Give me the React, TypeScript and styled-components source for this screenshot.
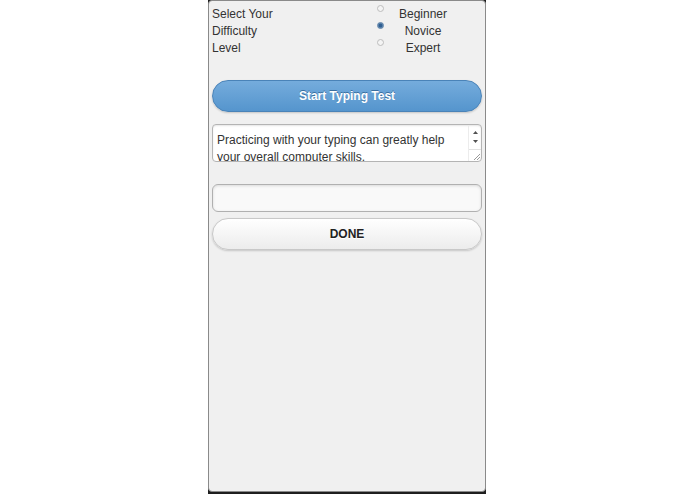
import React, { useState } from 'react';
import styled, { createGlobalStyle } from 'styled-components';

const GlobalStyle = createGlobalStyle`
  html, body {
    margin: 0;
    padding: 0;
    background: #ffffff;
    font-family: 'Liberation Sans', Arial, sans-serif;
  }
`;

const Device = styled.div`
  width: 278px;
  height: 494px;
  margin-left: 208px;
  background: #1e1e1e;
  overflow: hidden;
`;

const Screen = styled.div`
  box-sizing: border-box;
  height: 492px;
  background: #f0f0f0;
  border: 1px solid #8a8a8a;
  border-radius: 4px;
  padding: 5px 3px 0 3px;
  display: flex;
  flex-direction: column;
`;

const DifficultyRow = styled.div`
  display: flex;
  justify-content: space-between;
  align-items: flex-start;
`;

const Prompt = styled.div`
  font-size: 12px;
  line-height: 17px;
  color: #333;
  width: 70px;
`;

const RadioGroup = styled.div`
  display: flex;
  flex-direction: column;
  margin-right: 20px;
`;

const RadioRow = styled.label`
  display: flex;
  align-items: flex-start;
  height: 17px;
  cursor: pointer;
`;

const RadioDot = styled.span<{ $checked: boolean }>`
  box-sizing: border-box;
  width: 7px;
  height: 7px;
  margin-top: -1px;
  border-radius: 50%;
  border: 1px solid ${p => (p.$checked ? '#5a7fa6' : '#bdbdbd')};
  background: ${p =>
    p.$checked ? 'radial-gradient(circle, #2f5f92 40%, #a9c0d8 100%)' : '#f4f4f4'};
`;

const RadioText = styled.span`
  width: 78px;
  text-align: center;
  font-size: 12px;
  line-height: 17px;
  color: #333;
`;

const PillButton = styled.button<{ $primary?: boolean }>`
  box-sizing: border-box;
  width: 100%;
  height: 32px;
  border-radius: 16px;
  font-family: 'Liberation Sans', Arial, sans-serif;
  font-size: 12px;
  font-weight: bold;
  cursor: pointer;
  border: 1px solid ${p => (p.$primary ? '#4a83b8' : '#c8c8c8')};
  color: ${p => (p.$primary ? '#ffffff' : '#222222')};
  text-shadow: ${p => (p.$primary ? '0 -1px 0 #3a6f9f' : '0 1px 0 #ffffff')};
  background: ${p =>
    p.$primary
      ? 'linear-gradient(#75acdc, #5595cd)'
      : 'linear-gradient(#ffffff, #ececec)'};
  box-shadow: 0 1px 2px rgba(0, 0, 0, 0.18);
`;

const StartButton = styled(PillButton)`
  margin-top: 23px;
`;

const PassageBox = styled.div`
  box-sizing: border-box;
  display: flex;
  height: 38px;
  margin-top: 12px;
  border: 1px solid #b4b4b4;
  border-radius: 4px;
  background: #ffffff;
  overflow: hidden;
  box-shadow: inset 0 1px 2px rgba(0, 0, 0, 0.1);
`;

const Passage = styled.textarea`
  flex: 1;
  min-width: 0;
  margin: 0;
  padding: 7px 2px 0 4px;
  border: none;
  background: transparent;
  font-family: 'Liberation Sans', Arial, sans-serif;
  font-size: 12px;
  line-height: 17px;
  color: #333;
  resize: none;
  overflow: hidden;
  outline: none;
`;

const ScrollTrack = styled.div`
  width: 12px;
  display: flex;
  flex-direction: column;
  align-items: center;
  border-left: 1px solid #ececec;
  padding-top: 6px;
  gap: 6px;
`;

const Grip = styled.div`
  margin-top: auto;
  align-self: stretch;
  height: 11px;
  border-top: 1px solid #e2e2e2;
  display: flex;
  justify-content: flex-end;
  align-items: flex-end;
`;

const Answer = styled.input`
  box-sizing: border-box;
  width: 100%;
  height: 28px;
  margin-top: 22px;
  padding: 0 6px;
  border: 1px solid #b0b0b0;
  border-radius: 6px;
  background: #f9f9f9;
  font-family: 'Liberation Sans', Arial, sans-serif;
  font-size: 12px;
  outline: none;
  box-shadow: inset 0 1px 3px rgba(0, 0, 0, 0.12);
`;

const DoneButton = styled(PillButton)`
  margin-top: 6px;
`;

const Arrow: React.FC<{ up?: boolean }> = ({ up }) => (
  <svg width="5" height="3" viewBox="0 0 5 3">
    <polygon points={up ? '0,3 5,3 2.5,0' : '0,0 5,0 2.5,3'} fill="#505050" />
  </svg>
);

const levels = ['Beginner', 'Novice', 'Expert'];

const App: React.FC = () => {
  const [level, setLevel] = useState('Novice');
  const [typed, setTyped] = useState('');

  return (
    <>
      <GlobalStyle />
      <Device>
        <Screen>
          <DifficultyRow>
            <Prompt>Select Your Difficulty Level</Prompt>
            <RadioGroup>
              {levels.map(l => (
                <RadioRow key={l} onClick={() => setLevel(l)}>
                  <RadioDot $checked={level === l} />
                  <RadioText>{l}</RadioText>
                </RadioRow>
              ))}
            </RadioGroup>
          </DifficultyRow>
          <StartButton $primary>Start Typing Test</StartButton>
          <PassageBox>
            <Passage
              readOnly
              defaultValue="Practicing with your typing can greatly help your overall computer skills."
            />
            <ScrollTrack>
              <Arrow up />
              <Arrow />
              <Grip>
                <svg width="8" height="8" viewBox="0 0 8 8">
                  <line x1="7" y1="1" x2="1" y2="7" stroke="#9a9a9a" strokeWidth="1" />
                  <line x1="7" y1="4" x2="4" y2="7" stroke="#9a9a9a" strokeWidth="1" />
                </svg>
              </Grip>
            </ScrollTrack>
          </PassageBox>
          <Answer value={typed} onChange={e => setTyped(e.target.value)} />
          <DoneButton>DONE</DoneButton>
        </Screen>
      </Device>
    </>
  );
};

export default App;
